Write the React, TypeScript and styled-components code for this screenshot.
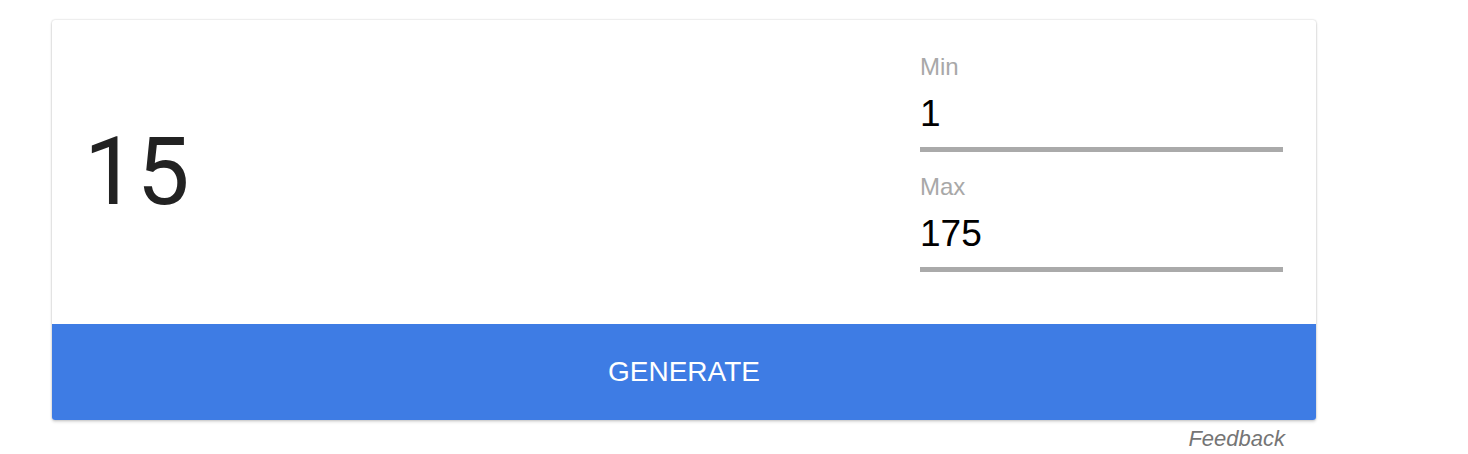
import React from "react";
import styled, { createGlobalStyle } from "styled-components";

const GlobalStyle = createGlobalStyle`
  html, body { margin: 0; padding: 0; background: #ffffff; }
  body { font-family: "Liberation Sans", Arial, sans-serif; }
`;

const Page = styled.div`
  padding: 20px 0 0 52px;
  width: 1264px;
`;

const Card = styled.div`
  width: 1264px;
  background: #ffffff;
  border-radius: 3px;
  box-shadow: 0 0 2px rgba(0, 0, 0, 0.24), 0 2px 3px rgba(0, 0, 0, 0.14);
  overflow: hidden;
`;

const Body = styled.div`
  display: flex;
  justify-content: space-between;
  height: 304px;
`;

const Result = styled.div`
  align-self: center;
  padding-left: 32px;
  font-family: Roboto, "Liberation Sans", sans-serif;
  font-size: 94px;
  line-height: 94px;
  color: #222222;
`;

const Fields = styled.div`
  width: 363px;
  margin: 33px 33px 0 0;
  display: flex;
  flex-direction: column;
  gap: 21px;
`;

const Field = styled.label`
  display: flex;
  flex-direction: column;
`;

const Label = styled.span`
  font-size: 24px;
  line-height: 28px;
  color: #a8a8a8;
`;

const Input = styled.input`
  margin-top: 11px;
  height: 44px;
  padding: 0 0 11px 0;
  border: none;
  outline: none;
  background: transparent;
  font-family: "Liberation Sans", Arial, sans-serif;
  font-size: 37px;
  line-height: 44px;
  color: #000000;
  border-bottom: 5px solid #aaaaaa;
  box-sizing: content-box;
`;

const GenerateButton = styled.button`
  display: block;
  width: 100%;
  height: 96px;
  border: none;
  margin: 0;
  background: #3e7ce4;
  color: #ffffff;
  font-family: "Liberation Sans", Arial, sans-serif;
  font-size: 28px;
  text-transform: uppercase;
  cursor: pointer;
`;

const FeedbackRow = styled.div`
  display: flex;
  justify-content: flex-end;
  padding-right: 31px;
  margin-top: 7px;
`;

const FeedbackLink = styled.a`
  font-size: 22px;
  line-height: 24px;
  font-style: italic;
  color: #757575;
  text-decoration: none;
`;

export default function App() {
  return (
    <>
      <GlobalStyle />
      <Page>
        <Card>
          <Body>
            <Result>15</Result>
            <Fields>
              <Field>
                <Label>Min</Label>
                <Input readOnly defaultValue="1" />
              </Field>
              <Field>
                <Label>Max</Label>
                <Input readOnly defaultValue="175" />
              </Field>
            </Fields>
          </Body>
          <GenerateButton>Generate</GenerateButton>
        </Card>
        <FeedbackRow>
          <FeedbackLink href="#">Feedback</FeedbackLink>
        </FeedbackRow>
      </Page>
    </>
  );
}
